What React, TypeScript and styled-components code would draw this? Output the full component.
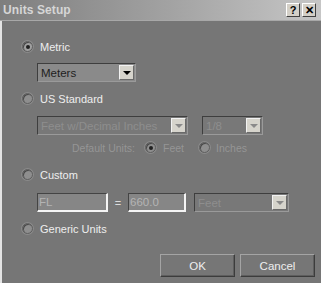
import React from "react";
import styled, { createGlobalStyle } from "styled-components";

const GlobalStyle = createGlobalStyle`
  html, body {
    margin: 0;
    padding: 0;
    background: #767676;
  }
  body {
    font-family: "Liberation Sans", Arial, sans-serif;
    font-size: 11px;
  }
`;

const Window = styled.div`
  width: 321px;
  height: 283px;
  box-sizing: border-box;
  display: flex;
  flex-direction: column;
  background: #767676;
  overflow: hidden;
`;

const TitleBar = styled.div`
  height: 20px;
  display: flex;
  align-items: center;
  justify-content: space-between;
  padding: 0 5px 0 3px;
  background: linear-gradient(to right, #7e7e7e 0%, #a4a4a4 55%, #c6c6c6 100%);
  border-bottom: 1px solid #a8a8a8;
`;

const Title = styled.span`
  font-weight: 700;
  font-size: 12px;
  color: #d6d6d6;
  letter-spacing: 0.1px;
`;

const TitleButtons = styled.div`
  display: flex;
  gap: 2px;
`;

const TitleButton = styled.div`
  width: 14px;
  height: 14px;
  box-sizing: border-box;
  background: #d4d0c8;
  border-top: 1px solid #ffffff;
  border-left: 1px solid #ffffff;
  border-right: 1px solid #404040;
  border-bottom: 1px solid #404040;
  display: flex;
  align-items: center;
  justify-content: center;
  font-weight: 700;
  font-size: 11px;
  color: #000;
  line-height: 1;
`;

const Body = styled.div`
  flex: 1;
  display: flex;
  flex-direction: column;
  border-left: 2px solid #e4e4e4;
  padding: 19px 0 0 20px;
`;

const RadioRow = styled.div<{ $mt?: number }>`
  display: flex;
  align-items: center;
  gap: 7px;
  height: 13px;
  margin-top: ${(p) => p.$mt ?? 0}px;
  color: #ececec;
`;

const RadioDot = styled.span<{ $on?: boolean; $dim?: boolean }>`
  width: 11px;
  height: 11px;
  flex: none;
  box-sizing: border-box;
  border-radius: 50%;
  background: ${(p) => (p.$dim ? "#8e8e8e" : "#a0a0a0")};
  border: 1px solid #5e5e5e;
  box-shadow: inset 1px 1px 0 #4a4a4a, 0 0 0 1px #8a8a8a;
  display: flex;
  align-items: center;
  justify-content: center;
  &::after {
    content: "";
    display: ${(p) => (p.$on ? "block" : "none")};
    width: 4px;
    height: 4px;
    border-radius: 50%;
    background: #202020;
  }
`;

const Label = styled.span<{ $disabled?: boolean }>`
  color: ${(p) => (p.$disabled ? "#959595" : "#eeeeee")};
  white-space: nowrap;
`;

const FieldRow = styled.div<{ $mt: number }>`
  display: flex;
  align-items: center;
  margin-top: ${(p) => p.$mt}px;
  margin-left: 15px;
`;

const Select = styled.div<{ $w: number; $disabled?: boolean }>`
  width: ${(p) => p.$w}px;
  height: 19px;
  box-sizing: border-box;
  display: flex;
  align-items: center;
  border-top: 1px solid #3e3e3e;
  border-left: 1px solid #3e3e3e;
  border-right: 1px solid #9a9a9a;
  border-bottom: 1px solid #9a9a9a;
  background: ${(p) => (p.$disabled ? "#787878" : "#8a8a8a")};
  padding: 1px;
`;

const SelectText = styled.span<{ $disabled?: boolean }>`
  flex: 1;
  padding-left: 2px;
  color: ${(p) => (p.$disabled ? "#8e8e8e" : "#1e1e1e")};
  font-size: 11.5px;
  white-space: nowrap;
  overflow: hidden;
`;

const ArrowButton = styled.span`
  width: 15px;
  height: 15px;
  box-sizing: border-box;
  background: #d6d4cc;
  border-top: 1px solid #f2f2f2;
  border-left: 1px solid #f2f2f2;
  border-right: 1px solid #6a6a6a;
  border-bottom: 1px solid #6a6a6a;
  display: flex;
  align-items: center;
  justify-content: center;
`;

const Arrow = styled.span<{ $disabled?: boolean }>`
  width: 0;
  height: 0;
  border-left: 4px solid transparent;
  border-right: 4px solid transparent;
  border-top: 4px solid ${(p) => (p.$disabled ? "#8a8a8a" : "#000")};
`;

const TextBox = styled.div<{ $w: number }>`
  width: ${(p) => p.$w}px;
  height: 19px;
  box-sizing: border-box;
  background: #868686;
  border-top: 1px solid #444;
  border-left: 1px solid #444;
  border-right: 2px solid #f4f4f4;
  border-bottom: 2px solid #f4f4f4;
  display: flex;
  align-items: center;
  padding-left: 1px;
  color: #b4b4b4;
  font-size: 11.5px;
`;

const Equals = styled.span`
  color: #dcdcdc;
  width: 20px;
  text-align: center;
`;

const DefaultUnits = styled.div`
  display: flex;
  align-items: center;
  height: 13px;
  margin-top: 6px;
  margin-left: 50px;
  font-size: 10.5px;
`;

const Spacer = styled.span<{ $w: number }>`
  width: ${(p) => p.$w}px;
  flex: none;
`;

const Footer = styled.div`
  display: flex;
  justify-content: flex-end;
  gap: 5px;
  margin-top: 19px;
  padding-right: 6px;
`;

const Button = styled.div`
  width: 75px;
  height: 23px;
  box-sizing: border-box;
  border-top: 1px solid #a4a4a4;
  border-left: 1px solid #a4a4a4;
  border-right: 1px solid #3c3c3c;
  border-bottom: 1px solid #3c3c3c;
  box-shadow: inset -1px -1px 0 #5e5e5e;
  display: flex;
  align-items: center;
  justify-content: center;
  color: #eeeeee;
  font-size: 11.5px;
`;

const SelectBox = ({ w, text, disabled }: { w: number; text: string; disabled?: boolean }) => (
  <Select $w={w} $disabled={disabled}>
    <SelectText $disabled={disabled}>{text}</SelectText>
    <ArrowButton>
      <Arrow $disabled={disabled} />
    </ArrowButton>
  </Select>
);

const App = () => {
  return (
    <Window>
      <GlobalStyle />
      <TitleBar>
        <Title>Units Setup</Title>
        <TitleButtons>
          <TitleButton>?</TitleButton>
          <TitleButton>✕</TitleButton>
        </TitleButtons>
      </TitleBar>
      <Body>
        <RadioRow>
          <RadioDot $on />
          <Label>Metric</Label>
        </RadioRow>
        <FieldRow $mt={10}>
          <SelectBox w={99} text="Meters" />
        </FieldRow>
        <RadioRow $mt={10}>
          <RadioDot $dim />
          <Label>US Standard</Label>
        </RadioRow>
        <FieldRow $mt={11}>
          <SelectBox w={151} text="Feet w/Decimal Inches" disabled />
          <Spacer $w={14} />
          <SelectBox w={61} text="1/8" disabled />
        </FieldRow>
        <DefaultUnits>
          <Label $disabled>Default Units:</Label>
          <Spacer $w={10} />
          <RadioDot $on $dim />
          <Spacer $w={7} />
          <Label $disabled>Feet</Label>
          <Spacer $w={15} />
          <RadioDot $dim />
          <Spacer $w={6} />
          <Label $disabled>Inches</Label>
        </DefaultUnits>
        <RadioRow $mt={14}>
          <RadioDot $dim />
          <Label>Custom</Label>
        </RadioRow>
        <FieldRow $mt={12}>
          <TextBox $w={71}>FL</TextBox>
          <Equals>=</Equals>
          <TextBox $w={58}>660.0</TextBox>
          <Spacer $w={8} />
          <SelectBox w={95} text="Feet" disabled />
        </FieldRow>
        <RadioRow $mt={10}>
          <RadioDot $dim />
          <Label>Generic Units</Label>
        </RadioRow>
        <Footer>
          <Button>OK</Button>
          <Button>Cancel</Button>
        </Footer>
      </Body>
    </Window>
  );
};

export default App;
